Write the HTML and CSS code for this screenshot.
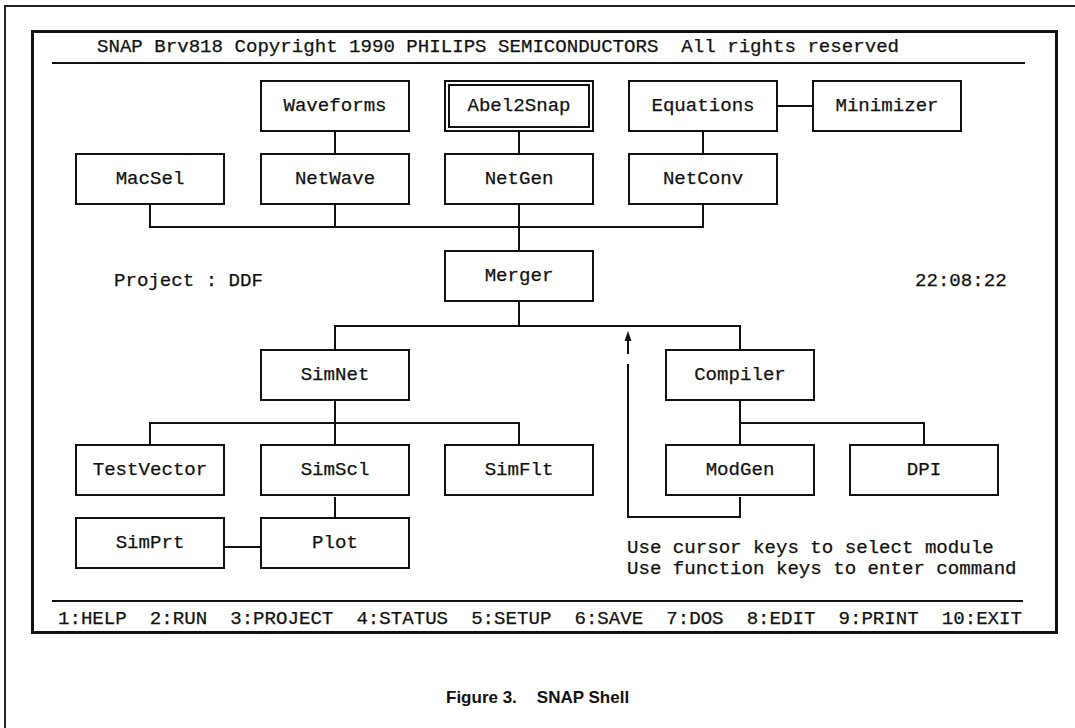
FILE: index.html
```html
<!DOCTYPE html>
<html lang="en">
<head>
  <meta charset="UTF-8" />
  <title>SNAP Shell</title>
  <link rel="stylesheet" href="styles.css">
</head>
<body>

<div class="sheet">
  <div class="screen">
    <div class="banner">SNAP Brv818 Copyright 1990 PHILIPS SEMICONDUCTORS&nbsp; All rights reserved</div>

    <div class="diagram">
      <svg class="wires" width="1021" height="536" viewBox="0 0 1021 536">
        <path d="M301 68V89 M485 68V89 M669 68V89 M744 42H778
                 M116 141V163 M301 141V163 M669 141V163 M485 141V186 M116 163H669
                 M485 238V262 M301 262H706 M301 262V285 M706 262V285
                 M301 337V382 M116 359H485 M116 359V382 M485 359V382
                 M706 337V382 M706 359H890 M890 359V382
                 M301 434V457 M191 483H226
                 M706 434V453H594V301 M594 289V276" />
        <polygon points="594,267 590.5,277 597.5,277" />
      </svg>

      <div class="mod m-waveforms">Waveforms</div>
      <div class="mod current m-abel">Abel2Snap</div>
      <div class="mod m-equations">Equations</div>
      <div class="mod m-minimizer">Minimizer</div>

      <div class="mod m-macsel">MacSel</div>
      <div class="mod m-netwave">NetWave</div>
      <div class="mod m-netgen">NetGen</div>
      <div class="mod m-netconv">NetConv</div>

      <div class="mod m-merger">Merger</div>

      <div class="mod m-simnet">SimNet</div>
      <div class="mod m-compiler">Compiler</div>

      <div class="mod m-testvector">TestVector</div>
      <div class="mod m-simscl">SimScl</div>
      <div class="mod m-simflt">SimFlt</div>
      <div class="mod m-modgen">ModGen</div>
      <div class="mod m-dpi">DPI</div>

      <div class="mod m-simprt">SimPrt</div>
      <div class="mod m-plot">Plot</div>

      <div class="note project">Project : DDF</div>
      <div class="note clock">22:08:22</div>
      <div class="note hint">Use cursor keys to select module<br>Use function keys to enter command</div>
    </div>

    <div class="keys">
      <span>1:HELP</span>
      <span>2:RUN</span>
      <span>3:PROJECT</span>
      <span>4:STATUS</span>
      <span>5:SETUP</span>
      <span>6:SAVE</span>
      <span>7:DOS</span>
      <span>8:EDIT</span>
      <span>9:PRINT</span>
      <span>10:EXIT</span>
    </div>
  </div>

  <p class="caption"><b>Figure 3.</b><b class="title">SNAP Shell</b></p>
</div>

</body>
</html>
```

FILE: styles.css
```css
body { margin: 0; background: #fff; color: #111; overflow: hidden; }

.sheet {
  margin: 5px 0 0 4px;
  height: 723px;
  border-left: 2px solid #222;
  border-top: 2px solid #222;
  padding: 23px 0 0 25px;
  box-sizing: border-box;
}

.screen {
  width: 1027px; height: 604px;
  border: 3px solid #111;
  box-sizing: border-box;
  font-family: "Liberation Mono", "Courier New", monospace;
  font-size: 19.1px; line-height: 22px;
  -webkit-text-stroke: 0.25px #111;
}

.banner {
  margin: 0 30px 0 18px;
  padding: 3px 0 4px 45px;
  border-bottom: 2px solid #111;
  white-space: pre;
}

.diagram { position: relative; height: 536px; }
.wires { position: absolute; left: 0; top: 0; }
.wires path { fill: none; stroke: #111; stroke-width: 2; stroke-linecap: square; }
.wires polygon { fill: #111; }

.mod {
  position: absolute;
  width: 150px; height: 52px;
  border: 2px solid #111;
  box-sizing: border-box;
  background: #fff;
  display: flex; align-items: center; justify-content: center;
}
.mod.current { box-shadow: inset 0 0 0 2px #fff, inset 0 0 0 4px #111; }

.m-waveforms { left: 226px; top: 16px; }
.m-abel { left: 410px; top: 16px; }
.m-equations { left: 594px; top: 16px; }
.m-minimizer { left: 778px; top: 16px; }
.m-macsel { left: 41px; top: 89px; }
.m-netwave { left: 226px; top: 89px; }
.m-netgen { left: 410px; top: 89px; }
.m-netconv { left: 594px; top: 89px; }
.m-merger { left: 410px; top: 186px; }
.m-simnet { left: 226px; top: 285px; }
.m-compiler { left: 631px; top: 285px; }
.m-testvector { left: 41px; top: 380px; }
.m-simscl { left: 226px; top: 380px; }
.m-simflt { left: 410px; top: 380px; }
.m-modgen { left: 631px; top: 380px; }
.m-dpi { left: 815px; top: 380px; }
.m-simprt { left: 41px; top: 453px; }
.m-plot { left: 226px; top: 453px; }

.note { position: absolute; white-space: pre; }
.project { left: 80px; top: 206px; }
.clock { left: 881px; top: 206px; }
.hint { left: 593px; top: 474px; line-height: 20.5px; }

.keys {
  margin: 0 32px 0 18px;
  padding: 6px 1px 1px 6px;
  border-top: 2px solid #111;
  display: flex; justify-content: space-between;
}

.caption {
  margin: 54px 0 0 415px;
  font-family: "Liberation Sans", Arial, sans-serif;
  font-size: 17px; line-height: 20px;
}
.caption .title { margin-left: 20px; }
```
